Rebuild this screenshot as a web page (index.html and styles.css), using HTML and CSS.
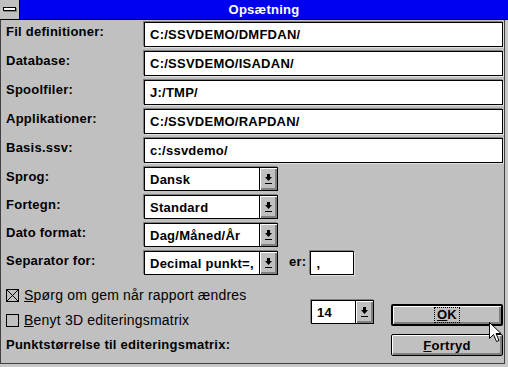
FILE: index.html
```html
<!DOCTYPE html>
<html lang="da">
<head>
  <meta charset="UTF-8">
  <title>Opsætning</title>
  <link rel="stylesheet" href="styles.css">
</head>
<body>
  <div class="window">
    <div class="titlebar">
      <div class="sysmenu"><span class="dash"></span></div>
      <div class="title">Opsætning</div>
    </div>
    <div class="content">
      <div class="row"><label>Fil definitioner:</label><div class="field">C:/SSVDEMO/DMFDAN/</div></div>
      <div class="row"><label>Database:</label><div class="field">C:/SSVDEMO/ISADAN/</div></div>
      <div class="row"><label>Spoolfiler:</label><div class="field">J:/TMP/</div></div>
      <div class="row"><label>Applikationer:</label><div class="field">C:/SSVDEMO/RAPDAN/</div></div>
      <div class="row"><label>Basis.ssv:</label><div class="field">c:/ssvdemo/</div></div>

      <div class="row combo-row first"><label>Sprog:</label>
        <div class="combo"><span class="value">Dansk</span><span class="drop"><svg width="7" height="10" viewBox="0 0 7 10"><path d="M2 0h3v3h2L3.5 7 0 3h2z"/><rect x="0" y="9" width="7" height="1"/></svg></span></div>
      </div>
      <div class="row combo-row"><label>Fortegn:</label>
        <div class="combo"><span class="value">Standard</span><span class="drop"><svg width="7" height="10" viewBox="0 0 7 10"><path d="M2 0h3v3h2L3.5 7 0 3h2z"/><rect x="0" y="9" width="7" height="1"/></svg></span></div>
      </div>
      <div class="row combo-row"><label>Dato format:</label>
        <div class="combo"><span class="value">Dag/Måned/År</span><span class="drop"><svg width="7" height="10" viewBox="0 0 7 10"><path d="M2 0h3v3h2L3.5 7 0 3h2z"/><rect x="0" y="9" width="7" height="1"/></svg></span></div>
      </div>
      <div class="row combo-row last"><label>Separator for:</label>
        <div class="combo"><span class="value">Decimal punkt=,</span><span class="drop"><svg width="7" height="10" viewBox="0 0 7 10"><path d="M2 0h3v3h2L3.5 7 0 3h2z"/><rect x="0" y="9" width="7" height="1"/></svg></span></div>
        <span class="er">er:</span>
        <div class="field small">,</div>
      </div>

      <div class="bottom">
        <div class="checks">
          <div class="check first"><span class="box"><svg width="11" height="11" viewBox="0 0 11 11"><path d="M0 0L11 11M11 0L0 11" stroke="#000" stroke-width="1"/></svg></span><span><u>S</u>pørg om gem når rapport ændres</span></div>
          <div class="check"><span class="box"></span><span><u>B</u>enyt 3D editeringsmatrix</span></div>
          <div class="caption">Punktstørrelse til editeringsmatrix:</div>
        </div>
        <div class="combo size"><span class="value">14</span><span class="drop"><svg width="7" height="10" viewBox="0 0 7 10"><path d="M2 0h3v3h2L3.5 7 0 3h2z"/><rect x="0" y="9" width="7" height="1"/></svg></span></div>
        <div class="buttons">
          <button class="btn default"><span class="focus"><u>O</u>K</span></button>
          <button class="btn"><u>F</u>ortryd</button>
        </div>
      </div>
    </div>
    <svg class="cursor" width="13" height="21" viewBox="0 0 13 21"><path d="M0.5 0.5V16.5L4.5 12.5L7.5 19.5L10 18.5L7 11.5H12Z" fill="#fff" stroke="#000"/></svg>
  </div>
</body>
</html>
```

FILE: styles.css
```css
body { margin: 0; background: #c8c8c8; font-family: "Liberation Sans", Arial, sans-serif; color: #000; }
.window { position: relative; width: 508px; height: 367px; }
.titlebar { display: flex; height: 19px; background: #0000f0; border-bottom: 1px solid #000; }
.sysmenu { width: 19px; height: 19px; background: #c0c0c0; border-right: 1px solid #000; display: flex; align-items: center; justify-content: center; }
.dash { width: 11px; height: 2px; border: 1px solid #000; background: #fff; box-shadow: 1px 1px 0 #808080; margin-top: -2px; }
.title { flex: 1; text-align: center; color: #fff; font-weight: bold; font-size: 13px; letter-spacing: .25px; line-height: 19px; }

.content { box-sizing: border-box; width: 505px; height: 344px; background: #c0c0c0; border: 1px solid #404040; border-top: 0; padding: 2px 1px 0 5px; }
.row { display: flex; height: 25px; margin-bottom: 4px; }
label, .er, .caption, .field, .combo, .btn { font-weight: bold; font-size: 13px; letter-spacing: .25px; }
label { width: 138px; line-height: 16px; padding-top: 2px; }
.field { flex: 1; box-sizing: border-box; background: #fff; border: 1px solid #000; box-shadow: -1px -1px 0 #808080, 1px 1px 0 #e0e0e0; padding-left: 5px; line-height: 24px; white-space: nowrap; }

.combo-row { height: 24px; }
.combo-row.first { margin-top: 2px; }
.combo-row.last { margin-bottom: 0; }
.combo-row label { padding-top: 2px; }
.combo { display: flex; box-sizing: border-box; width: 134px; height: 24px; background: #fff; border: 1px solid #000; box-shadow: -1px -1px 0 #808080; }
.combo .value { flex: 1; padding-left: 5px; line-height: 23px; overflow: hidden; white-space: nowrap; }
.drop { width: 17px; border-left: 1px solid #000; background: #c0c0c0; box-shadow: inset 1px 1px 0 #fff, inset -2px -2px 0 #808080; display: flex; align-items: center; justify-content: center; }
.drop svg { margin: 0 1px 1px 0; }
.er { margin: 0 4px 0 11px; line-height: 20px; padding-top: 1px; }
.field.small { flex: none; width: 44px; }

.bottom { display: flex; align-items: flex-start; }
.checks { width: 305px; }
.check { display: flex; align-items: center; height: 16px; margin-top: 9px; font-size: 14px; letter-spacing: .2px; }
.check.first { margin-top: 12px; }
.box { width: 11px; height: 11px; border: 1px solid #000; margin-right: 5px; display: flex; }
.caption { margin-top: 9px; line-height: 16px; }
.combo.size { width: 63px; margin-top: 25px; }
.buttons { margin: 29px 0 0 17px; display: flex; flex-direction: column; gap: 8px; }
.btn { display: flex; align-items: center; justify-content: center; width: 112px; height: 22px; box-sizing: border-box; padding: 0; border: 1px solid #000; border-radius: 2px; background: #c0c0c0; box-shadow: inset 1px 1px 0 #fff, inset -2px -2px 0 #808080; font-family: "Liberation Sans", Arial, sans-serif; color: #000; }
.btn.default { border-width: 2px; }
.focus { border: 1px dotted #000; padding: 0 2px; line-height: 14px; }

.cursor { position: absolute; left: 489px; top: 322px; }
```
